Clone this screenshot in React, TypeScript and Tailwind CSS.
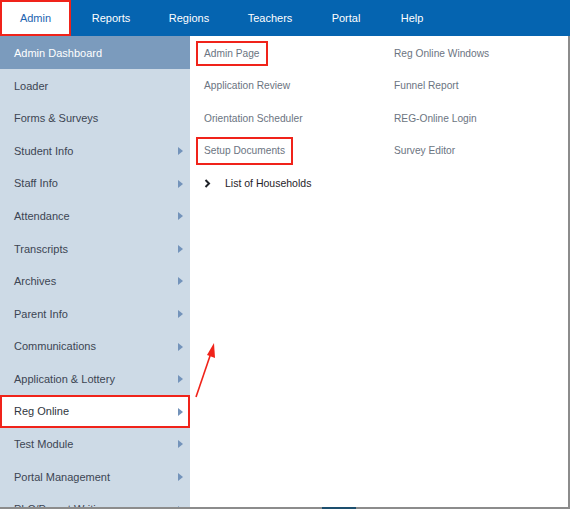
import React from 'react';

const navItems = ['Reports', 'Regions', 'Teachers', 'Portal', 'Help'];
const navWidths = ['w-[80px]', 'w-[76px]', 'w-[86px]', 'w-[66px]', 'w-[66px]'];

const sideItems: { label: string; sub?: boolean }[] = [
  { label: 'Loader' },
  { label: 'Forms & Surveys' },
  { label: 'Student Info', sub: true },
  { label: 'Staff Info', sub: true },
  { label: 'Attendance', sub: true },
  { label: 'Transcripts', sub: true },
  { label: 'Archives', sub: true },
  { label: 'Parent Info', sub: true },
  { label: 'Communications', sub: true },
  { label: 'Application & Lottery', sub: true },
];

const Caret = () => (
  <svg width="5" height="8" viewBox="0 0 5 8" className="shrink-0">
    <path d="M0 0 L5 4 L0 8 Z" fill="#7393ba" />
  </svg>
);

const SideRow = ({ label, sub }: { label: string; sub?: boolean }) => (
  <div className="h-[32.6px] flex items-center justify-between pl-[14px] pr-[7px] pt-[1px] text-[#3c4553]">
    <span>{label}</span>
    {sub && <Caret />}
  </div>
);

const App: React.FC = () => {
  return (
    <div className="w-[570px] h-[509px] overflow-hidden bg-white font-['Liberation_Sans',Arial,sans-serif] flex flex-col">
      {/* Top nav */}
      <div className="h-[36px] bg-[#0564b0] flex items-stretch shrink-0 text-[11px] text-white">
        <div className="w-[71px] bg-white border-2 border-[#f0231a] flex items-center justify-center pt-[1px] text-[#1d63b0]">
          Admin
        </div>
        {navItems.map((n, i) => (
          <div key={n} className={`${navWidths[i]} flex items-center justify-center pt-[1px]`}>
            {n}
          </div>
        ))}
      </div>

      <div className="flex flex-1 min-h-0 border-r-2 border-[#8c8c8c]">
        {/* Sidebar */}
        <div className="w-[190px] bg-[#cddae6] text-[11px] shrink-0 overflow-hidden">
          <div className="h-[33px] bg-[#7b9bbd] text-white flex items-center pl-[14px] pt-[1px]">Admin Dashboard</div>
          {sideItems.map((s) => (
            <SideRow key={s.label} {...s} />
          ))}
          <div className="h-[32.6px] bg-white border-2 border-[#f0231a] flex items-center justify-between pl-[12px] pr-[5px] pt-[1px] text-[#2f3640]">
            <span>Reg Online</span>
            <Caret />
          </div>
          <SideRow label="Test Module" sub />
          <SideRow label="Portal Management" sub />
          <SideRow label="PLC/Parent Writing" sub />
        </div>

        {/* Submenu panel */}
        <div className="relative flex-1 pt-[1px] text-[10.2px] text-[#6b7481]">
          <div className="grid grid-cols-[190px_1fr]">
            <div className="flex flex-col">
              <div className="h-[32.6px] flex items-center pl-[6px]">
                <span className="border-2 border-[#f0231a] px-[6px] py-[3px]">Admin Page</span>
              </div>
              <div className="h-[32.6px] flex items-center pl-[14px]">Application Review</div>
              <div className="h-[32.6px] flex items-center pl-[14px]">Orientation Scheduler</div>
              <div className="h-[32.6px] flex items-center pl-[6px]">
                <span className="border-2 border-[#f0231a] px-[6px] py-[4px]">Setup Documents</span>
              </div>
              <div className="h-[32.6px] flex items-center pl-[14px] text-[10.5px] text-[#1f2329]">
                <svg width="7" height="9" viewBox="0 0 7 9" className="mr-[14px]">
                  <path d="M1.5 1 L5 4.5 L1.5 8" stroke="#1f2329" strokeWidth="2" fill="none" />
                </svg>
                List of Households
              </div>
            </div>
            <div className="flex flex-col">
              <div className="h-[32.6px] flex items-center pl-[14px]">Reg Online Windows</div>
              <div className="h-[32.6px] flex items-center pl-[14px]">Funnel Report</div>
              <div className="h-[32.6px] flex items-center pl-[14px]">REG-Online Login</div>
              <div className="h-[32.6px] flex items-center pl-[14px]">Survey Editor</div>
            </div>
          </div>

          {/* annotation arrow */}
          <svg className="absolute left-0 top-[300px]" width="40" height="70" viewBox="0 0 40 70">
            <line x1="6" y1="61" x2="21" y2="17" stroke="#f0231a" strokeWidth="1.6" />
            <path d="M24 7 L25 22 L17 19 Z" fill="#f0231a" />
          </svg>
        </div>
      </div>
      <div className="h-[2px] bg-[#8c8c8c] shrink-0 flex">
        <div className="ml-[322px] w-[34px] bg-[#1d4f6e]" />
      </div>
    </div>
  );
};

export default App;
